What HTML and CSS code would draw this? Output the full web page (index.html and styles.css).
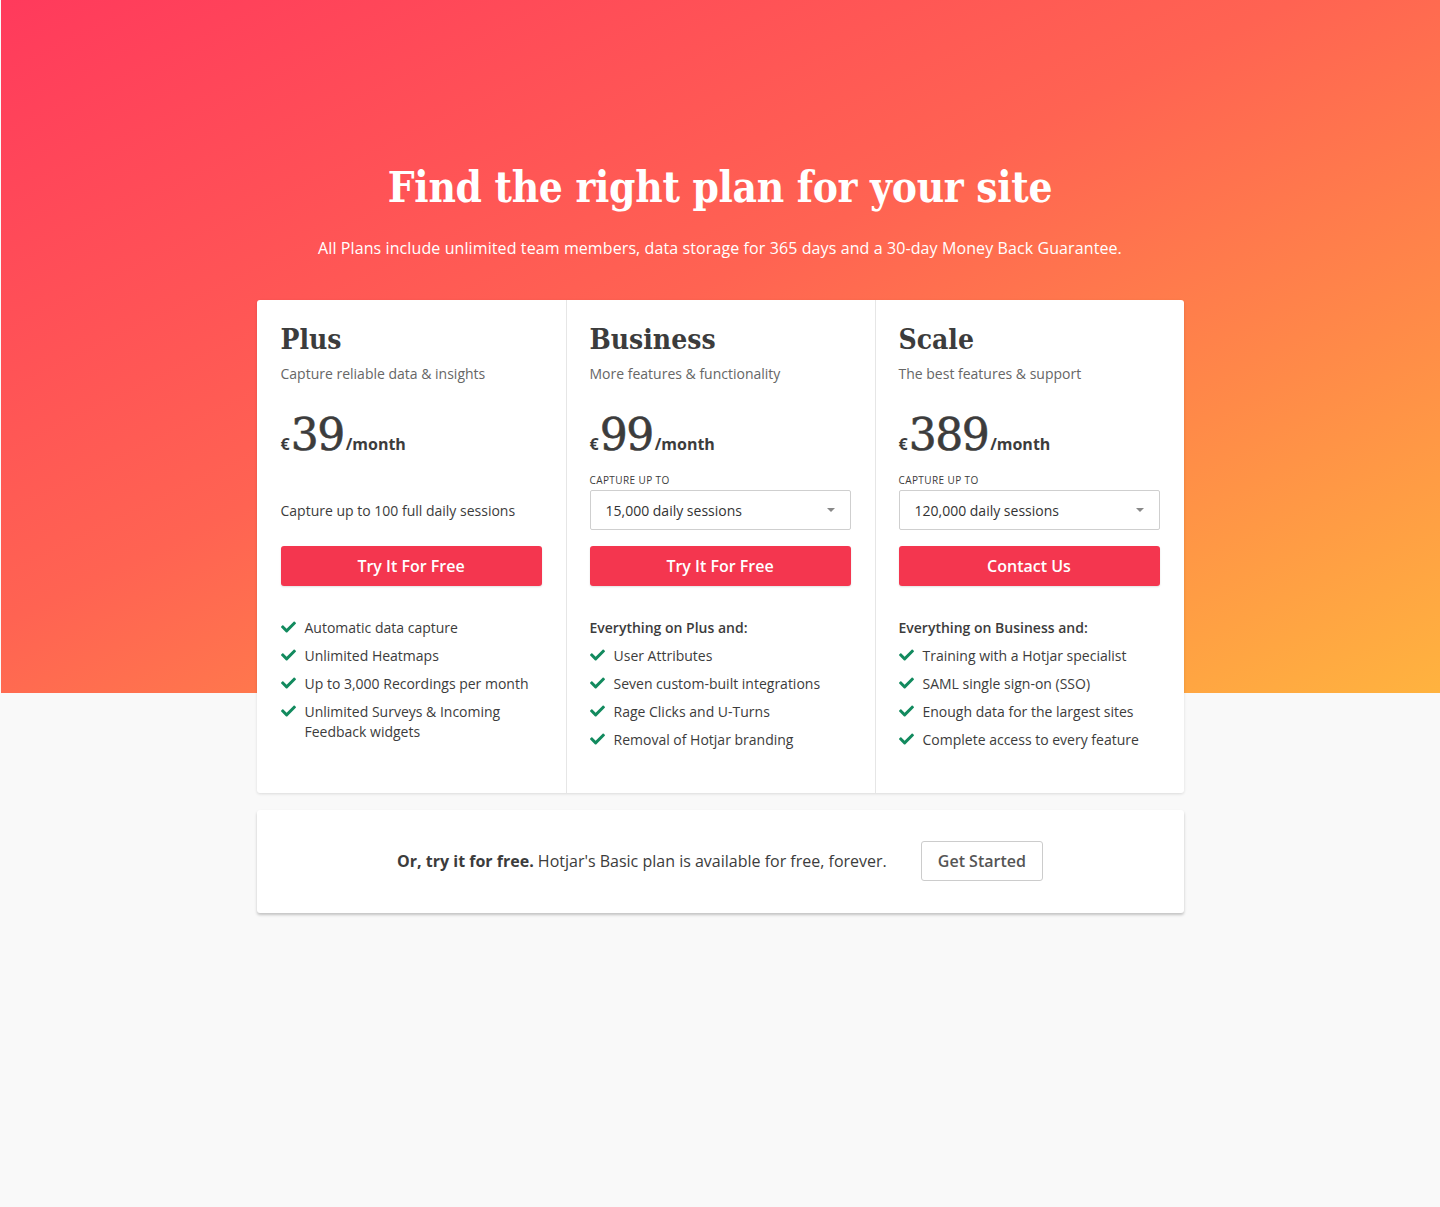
FILE: index.html
```html
<!DOCTYPE html>
<html lang="en">
<head>
<meta charset="utf-8">
<title>Pricing</title>
<link rel="stylesheet" href="styles.css">
</head>
<body>
<main class="page">
  <header class="hero">
    <h1 class="hero-title">Find the right plan for your site</h1>
    <p class="hero-sub">All Plans include unlimited team members, data storage for 365 days and a 30-day Money Back Guarantee.</p>
  </header>

  <section class="plans">
    <article class="plan">
      <h2 class="plan-name">Plus</h2>
      <p class="plan-desc">Capture reliable data &amp; insights</p>
      <div class="price"><span class="cur">€</span><span class="amount">39</span><span class="per">/month</span></div>
      <div class="label"></div>
      <div class="sessions-static">Capture up to 100 full daily sessions</div>
      <a class="btn-primary" href="#">Try It For Free</a>
      <ul class="features">
        <li><svg class="check" viewBox="0 60 512 390"><path d="M173.9 439.4l-166.4-166.4c-10-10-10-26.2 0-36.2l36.2-36.2c10-10 26.2-10 36.2 0L192 312.7 432.1 72.6c10-10 26.2-10 36.2 0l36.2 36.2c10 10 10 26.2 0 36.2l-294.4 294.4c-10 10-26.2 10-36.2 0z"/></svg><span>Automatic data capture</span></li>
        <li><svg class="check" viewBox="0 60 512 390"><path d="M173.9 439.4l-166.4-166.4c-10-10-10-26.2 0-36.2l36.2-36.2c10-10 26.2-10 36.2 0L192 312.7 432.1 72.6c10-10 26.2-10 36.2 0l36.2 36.2c10 10 10 26.2 0 36.2l-294.4 294.4c-10 10-26.2 10-36.2 0z"/></svg><span>Unlimited Heatmaps</span></li>
        <li><svg class="check" viewBox="0 60 512 390"><path d="M173.9 439.4l-166.4-166.4c-10-10-10-26.2 0-36.2l36.2-36.2c10-10 26.2-10 36.2 0L192 312.7 432.1 72.6c10-10 26.2-10 36.2 0l36.2 36.2c10 10 10 26.2 0 36.2l-294.4 294.4c-10 10-26.2 10-36.2 0z"/></svg><span>Up to 3,000 Recordings per month</span></li>
        <li><svg class="check" viewBox="0 60 512 390"><path d="M173.9 439.4l-166.4-166.4c-10-10-10-26.2 0-36.2l36.2-36.2c10-10 26.2-10 36.2 0L192 312.7 432.1 72.6c10-10 26.2-10 36.2 0l36.2 36.2c10 10 10 26.2 0 36.2l-294.4 294.4c-10 10-26.2 10-36.2 0z"/></svg><span>Unlimited Surveys &amp; Incoming Feedback widgets</span></li>
      </ul>
    </article>

    <article class="plan plan-bordered">
      <h2 class="plan-name">Business</h2>
      <p class="plan-desc">More features &amp; functionality</p>
      <div class="price"><span class="cur">€</span><span class="amount">99</span><span class="per">/month</span></div>
      <div class="label">CAPTURE UP TO</div>
      <div class="select"><span>15,000 daily sessions</span><span class="caret"></span></div>
      <a class="btn-primary" href="#">Try It For Free</a>
      <p class="features-head">Everything on Plus and:</p>
      <ul class="features">
        <li><svg class="check" viewBox="0 60 512 390"><path d="M173.9 439.4l-166.4-166.4c-10-10-10-26.2 0-36.2l36.2-36.2c10-10 26.2-10 36.2 0L192 312.7 432.1 72.6c10-10 26.2-10 36.2 0l36.2 36.2c10 10 10 26.2 0 36.2l-294.4 294.4c-10 10-26.2 10-36.2 0z"/></svg><span>User Attributes</span></li>
        <li><svg class="check" viewBox="0 60 512 390"><path d="M173.9 439.4l-166.4-166.4c-10-10-10-26.2 0-36.2l36.2-36.2c10-10 26.2-10 36.2 0L192 312.7 432.1 72.6c10-10 26.2-10 36.2 0l36.2 36.2c10 10 10 26.2 0 36.2l-294.4 294.4c-10 10-26.2 10-36.2 0z"/></svg><span>Seven custom-built integrations</span></li>
        <li><svg class="check" viewBox="0 60 512 390"><path d="M173.9 439.4l-166.4-166.4c-10-10-10-26.2 0-36.2l36.2-36.2c10-10 26.2-10 36.2 0L192 312.7 432.1 72.6c10-10 26.2-10 36.2 0l36.2 36.2c10 10 10 26.2 0 36.2l-294.4 294.4c-10 10-26.2 10-36.2 0z"/></svg><span>Rage Clicks and U-Turns</span></li>
        <li><svg class="check" viewBox="0 60 512 390"><path d="M173.9 439.4l-166.4-166.4c-10-10-10-26.2 0-36.2l36.2-36.2c10-10 26.2-10 36.2 0L192 312.7 432.1 72.6c10-10 26.2-10 36.2 0l36.2 36.2c10 10 10 26.2 0 36.2l-294.4 294.4c-10 10-26.2 10-36.2 0z"/></svg><span>Removal of Hotjar branding</span></li>
      </ul>
    </article>

    <article class="plan plan-bordered">
      <h2 class="plan-name">Scale</h2>
      <p class="plan-desc">The best features &amp; support</p>
      <div class="price"><span class="cur">€</span><span class="amount">389</span><span class="per">/month</span></div>
      <div class="label">CAPTURE UP TO</div>
      <div class="select"><span>120,000 daily sessions</span><span class="caret"></span></div>
      <a class="btn-primary" href="#">Contact Us</a>
      <p class="features-head">Everything on Business and:</p>
      <ul class="features">
        <li><svg class="check" viewBox="0 60 512 390"><path d="M173.9 439.4l-166.4-166.4c-10-10-10-26.2 0-36.2l36.2-36.2c10-10 26.2-10 36.2 0L192 312.7 432.1 72.6c10-10 26.2-10 36.2 0l36.2 36.2c10 10 10 26.2 0 36.2l-294.4 294.4c-10 10-26.2 10-36.2 0z"/></svg><span>Training with a Hotjar specialist</span></li>
        <li><svg class="check" viewBox="0 60 512 390"><path d="M173.9 439.4l-166.4-166.4c-10-10-10-26.2 0-36.2l36.2-36.2c10-10 26.2-10 36.2 0L192 312.7 432.1 72.6c10-10 26.2-10 36.2 0l36.2 36.2c10 10 10 26.2 0 36.2l-294.4 294.4c-10 10-26.2 10-36.2 0z"/></svg><span>SAML single sign-on (SSO)</span></li>
        <li><svg class="check" viewBox="0 60 512 390"><path d="M173.9 439.4l-166.4-166.4c-10-10-10-26.2 0-36.2l36.2-36.2c10-10 26.2-10 36.2 0L192 312.7 432.1 72.6c10-10 26.2-10 36.2 0l36.2 36.2c10 10 10 26.2 0 36.2l-294.4 294.4c-10 10-26.2 10-36.2 0z"/></svg><span>Enough data for the largest sites</span></li>
        <li><svg class="check" viewBox="0 60 512 390"><path d="M173.9 439.4l-166.4-166.4c-10-10-10-26.2 0-36.2l36.2-36.2c10-10 26.2-10 36.2 0L192 312.7 432.1 72.6c10-10 26.2-10 36.2 0l36.2 36.2c10 10 10 26.2 0 36.2l-294.4 294.4c-10 10-26.2 10-36.2 0z"/></svg><span>Complete access to every feature</span></li>
      </ul>
    </article>
  </section>

  <section class="free">
    <p class="free-text"><strong>Or, try it for free.</strong> Hotjar's Basic plan is available for free, forever.</p>
    <a class="btn-outline" href="#">Get Started</a>
  </section>
</main>
</body>
</html>
```

FILE: styles.css
```css
* { box-sizing: border-box; }

html, body { margin: 0; padding: 0; }

body {
  min-height: 1207px;
  font-family: "Open Sans", "Noto Sans", sans-serif;
  color: #3c3c3c;
  background:
    linear-gradient(to bottom right, #ff3a5c 0%, #ff6352 45%, #ff8a48 72%, #ffb33f 100%) 1px 0 / calc(100% - 1px) 693px no-repeat,
    #f9f9f9;
}

.page {
  width: 927px;
  margin: 0 auto;
  padding-top: 160px;
}

.hero { text-align: center; }

.hero-title {
  margin: 0;
  font-family: "DejaVu Serif Condensed", "DejaVu Serif", "Liberation Serif", serif;
  font-stretch: semi-condensed;
  font-weight: 700;
  font-size: 42px;
  line-height: 56px;
  color: #fff;
  letter-spacing: -0.3px;
}

.hero-sub {
  margin: 20px 0 0;
  font-size: 16px;
  line-height: 24px;
  color: #fff;
  letter-spacing: 0.1px;
}

.plans {
  margin-top: 40px;
  display: grid;
  grid-template-columns: repeat(3, 1fr);
  background: #fff;
  border-radius: 3px;
  box-shadow: 0 1px 3px rgba(0, 0, 0, 0.12);
}

.plan {
  padding: 22px 24px 43px;
  display: flex;
  flex-direction: column;
}

.plan-bordered {
  border-left: 1px solid #e6e6e6;
  padding-left: 23px;
}

.plan-name {
  margin: 0;
  font-family: "DejaVu Serif Condensed", "DejaVu Serif", "Liberation Serif", serif;
  font-stretch: semi-condensed;
  font-weight: 700;
  font-size: 28px;
  line-height: 36px;
  color: #3c3c3c;
}

.plan-desc {
  margin: 6px 0 0;
  font-size: 14px;
  line-height: 20px;
  color: #666;
}

.price {
  margin-top: 26px;
  height: 50px;
  display: flex;
  align-items: baseline;
  color: #3c3c3c;
}

.cur {
  font-size: 16px;
  font-weight: 700;
}

.amount {
  font-family: "DejaVu Serif", "Liberation Serif", serif;
  font-size: 44px;
  line-height: 50px;
  letter-spacing: -1.5px;
  margin-left: 1px;
  -webkit-text-stroke: 0.6px #3c3c3c;
}

.per {
  font-size: 16px;
  font-weight: 700;
  margin-left: 2px;
}

.label {
  margin-top: 13px;
  height: 14px;
  font-size: 10px;
  line-height: 14px;
  letter-spacing: 0.4px;
  color: #3c3c3c;
}

.sessions-static {
  margin-top: 3px;
  height: 40px;
  display: flex;
  align-items: center;
  font-size: 14px;
  color: #3c3c3c;
}

.select {
  margin-top: 3px;
  height: 40px;
  border: 1px solid #cfcfcf;
  border-radius: 2px;
  padding: 0 15px;
  display: flex;
  align-items: center;
  justify-content: space-between;
  font-size: 14px;
  color: #333;
  background: #fff;
}

.caret {
  width: 0;
  height: 0;
  border-left: 4px solid transparent;
  border-right: 4px solid transparent;
  border-top: 4px solid #888;
}

.btn-primary {
  margin-top: 16px;
  height: 40px;
  display: flex;
  align-items: center;
  justify-content: center;
  background: #f4364f;
  color: #fff;
  border-radius: 3px;
  font-size: 16px;
  font-weight: 600;
  text-decoration: none;
  box-shadow: 0 1px 2px rgba(0, 0, 0, 0.12);
}

.features-head {
  margin: 32px 0 0;
  font-size: 14px;
  line-height: 20px;
  font-weight: 600;
  color: #3c3c3c;
}

.features {
  list-style: none;
  margin: 32px 0 0;
  padding: 0;
  display: flex;
  flex-direction: column;
  gap: 8px;
}

.features-head + .features { margin-top: 8px; }

.features li {
  display: flex;
  align-items: flex-start;
  font-size: 14px;
  line-height: 20px;
  color: #3c3c3c;
}

.check {
  flex: none;
  width: 15px;
  height: 12px;
  margin-top: 3px;
  margin-right: 9px;
  fill: #128a5e;
}

.free {
  margin-top: 17px;
  background: #fff;
  border-radius: 3px;
  box-shadow: 0 2px 3px rgba(0, 0, 0, 0.22);
  padding: 31px 0 32px;
  display: flex;
  align-items: center;
  justify-content: center;
  gap: 34px;
}

.free-text {
  margin: 0;
  font-size: 16px;
  line-height: 24px;
  color: #3c3c3c;
}

.free-text strong { font-weight: 700; }

.btn-outline {
  height: 40px;
  padding: 0 16px;
  display: flex;
  align-items: center;
  border: 1px solid #cccccc;
  border-radius: 3px;
  font-size: 16px;
  font-weight: 600;
  color: #555;
  text-decoration: none;
  background: #fff;
}
```
